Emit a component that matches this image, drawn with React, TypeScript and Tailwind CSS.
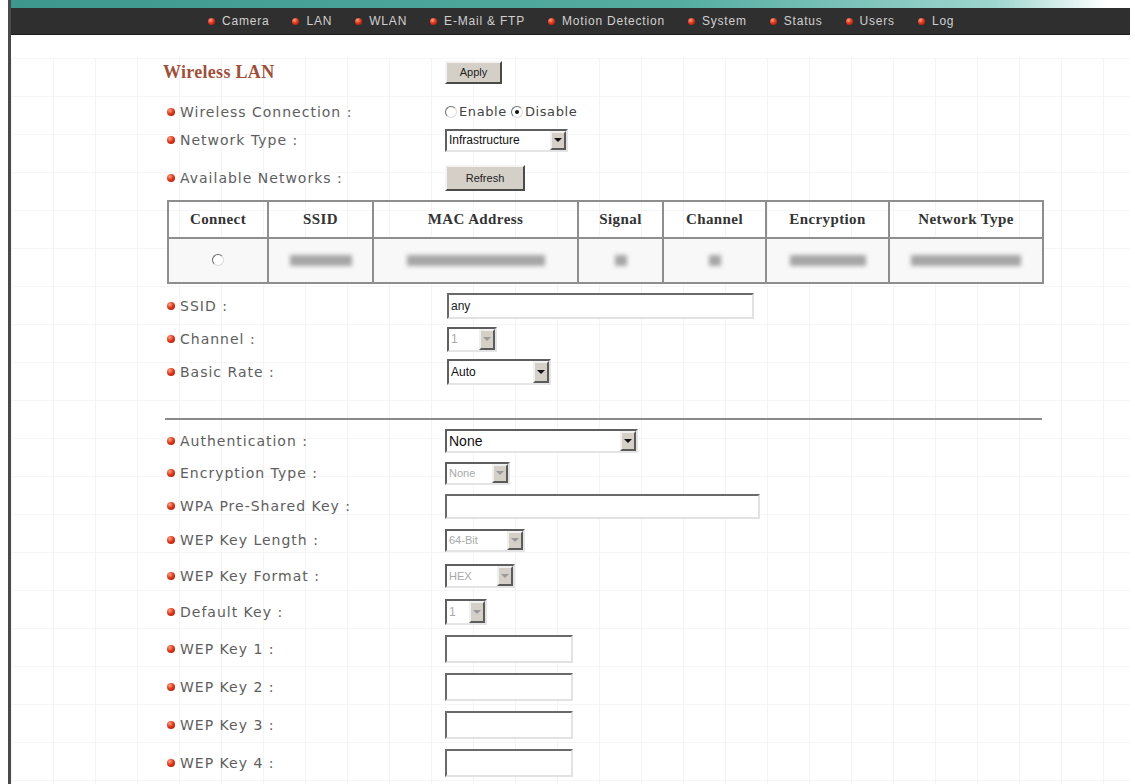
import React from 'react';

const navItems = ['Camera', 'LAN', 'WLAN', 'E-Mail & FTP', 'Motion Detection', 'System', 'Status', 'Users', 'Log'];

const Bullet = ({ small = false }: { small?: boolean }) => (
  <span
    className={`inline-block shrink-0 rounded-full bg-[radial-gradient(circle_at_35%_30%,#ffa386_0%,#e23a1d_45%,#8c1405_100%)] ${
      small ? 'w-[7px] h-[7px]' : 'w-[8px] h-[8px]'
    }`}
  />
);

const WinButton = ({ label, size }: { label: string; size: string }) => (
  <div
    className={`flex items-center justify-center bg-[#d4d0c8] border-2 border-t-[#f4f4f4] border-l-[#f4f4f4] border-b-[#4a4a4a] border-r-[#4a4a4a] text-[11px] text-[#222] font-['Liberation_Sans',sans-serif] ${size}`}
  >
    {label}
  </div>
);

const Arrow = ({ disabled = false }: { disabled?: boolean }) => (
  <span className="w-[16px] h-full flex items-center justify-center bg-[#d4d0c8] border-2 border-t-[#f0f0f0] border-l-[#f0f0f0] border-b-[#5a5a5a] border-r-[#5a5a5a]">
    <span
      className={`w-0 h-0 border-l-[4px] border-r-[4px] border-t-[4px] border-l-transparent border-r-transparent ${
        disabled ? 'border-t-[#9a9a9a]' : 'border-t-[#111]'
      }`}
    />
  </span>
);

const WinSelect = ({ value, size, disabled = false, text = 'text-[12px]' }: { value: string; size: string; disabled?: boolean; text?: string }) => (
  <div className={`flex border-2 border-t-[#5e5e5e] border-l-[#5e5e5e] border-b-[#e4e4e4] border-r-[#e4e4e4] bg-white ${size}`}>
    <span
      className={`flex-1 self-center pl-[2px] leading-none font-['Liberation_Sans',sans-serif] ${text} ${
        disabled ? 'text-[#a8a8a8]' : 'text-[#111]'
      }`}
    >
      {value}
    </span>
    <Arrow disabled={disabled} />
  </div>
);

const WinInput = ({ value = '', size }: { value?: string; size: string }) => (
  <div
    className={`flex items-center border-2 border-t-[#6a6a6a] border-l-[#6a6a6a] border-b-[#e2e2e2] border-r-[#e2e2e2] bg-white pl-[2px] text-[12px] text-[#222] font-['Liberation_Sans',sans-serif] ${size}`}
  >
    {value}
  </div>
);

const Radio = ({ checked = false }: { checked?: boolean }) => (
  <span className="inline-flex items-center justify-center w-[12px] h-[12px] rounded-full border border-t-[#6a6a6a] border-l-[#6a6a6a] border-b-[#dcdcdc] border-r-[#dcdcdc] bg-white">
    {checked && <span className="w-[4px] h-[4px] rounded-full bg-[#111]" />}
  </span>
);

const Row = ({ label, cls, children }: { label: string; cls: string; children: React.ReactNode }) => (
  <div className={`flex items-center ${cls}`}>
    <div className="w-[282px] flex items-center pl-[4px]">
      <Bullet />
      <span className="ml-[5px] text-[14px] tracking-[1px] text-[#5e5e5e] font-['DejaVu_Sans',sans-serif]">{label}</span>
    </div>
    <div className="flex items-center">{children}</div>
  </div>
);

// blurred placeholder for a scanned network value
const Smudge = ({ w }: { w: string }) => <span className={`inline-block h-[11px] bg-[#a6a6a6] blur-[2px] ${w}`} />;

const cols = [
  { title: 'Connect', w: 'w-[100px]' },
  { title: 'SSID', w: 'w-[105px]' },
  { title: 'MAC Address', w: 'w-[205px]' },
  { title: 'Signal', w: 'w-[85px]' },
  { title: 'Channel', w: 'w-[103px]' },
  { title: 'Encryption', w: 'w-[123px]' },
  { title: 'Network Type', w: 'w-[154px]' },
];

const NetworkTable = () => (
  <table className="ml-[4px] mt-[8px] border-collapse border-2 border-[#8e8e8e] font-['Liberation_Serif',serif]">
    <thead>
      <tr className="h-[37px]">
        {cols.map((c) => (
          <th key={c.title} className={`${c.w} border-2 border-[#8e8e8e] text-[15px] tracking-[0.4px] font-bold text-[#333] text-center`}>
            {c.title}
          </th>
        ))}
      </tr>
    </thead>
    <tbody>
      <tr className="h-[45px] bg-[#f8f8f8]">
        <td className="border-2 border-[#8e8e8e] text-center">
          <span className="inline-flex"><Radio /></span>
        </td>
        <td className="border-2 border-[#8e8e8e] text-center"><Smudge w="w-[62px]" /></td>
        <td className="border-2 border-[#8e8e8e] text-center"><Smudge w="w-[138px]" /></td>
        <td className="border-2 border-[#8e8e8e] text-center"><Smudge w="w-[12px]" /></td>
        <td className="border-2 border-[#8e8e8e] text-center"><Smudge w="w-[12px]" /></td>
        <td className="border-2 border-[#8e8e8e] text-center"><Smudge w="w-[76px]" /></td>
        <td className="border-2 border-[#8e8e8e] text-center"><Smudge w="w-[110px]" /></td>
      </tr>
    </tbody>
  </table>
);

export default function App() {
  return (
    <div className="w-[1135px] h-[784px] overflow-hidden bg-white">
      <div className="ml-[8px] mr-[5px] h-full border-l-[3px] border-[#4a4a4a]">
        <div className="h-[8px] bg-[linear-gradient(to_right,#3d978c,#55ada2_60%,#9ed6cf_88%,#ffffff_98%)]" />
        <nav className="h-[27px] bg-[#2f2f2f] flex items-center pl-[197px] gap-[23px] border-b border-[#1c1c1c]">
          {navItems.map((item) => (
            <span key={item} className="flex items-center gap-[7px]">
              <Bullet small />
              <span className="text-[12px] tracking-[0.8px] text-[#d0d0d0] font-['Liberation_Sans',sans-serif]">{item}</span>
            </span>
          ))}
        </nav>

        <main className="pl-[152px] h-full bg-[linear-gradient(to_right,#f4f4f4_1px,transparent_1px),linear-gradient(to_bottom,#f6f6f6_1px,transparent_1px)] bg-[size:42px_38px]">
          <div className="flex items-center mt-[23px] h-[28px]">
            <h1 className="w-[282px] text-[18px] tracking-[0.3px] font-bold text-[#a0503a] font-['Liberation_Serif',serif]">Wireless LAN</h1>
            <WinButton label="Apply" size="w-[57px] h-[23px]" />
          </div>

          <Row label="Wireless Connection :" cls="mt-[12px] h-[28px]">
            <span className="flex items-center gap-[2px] text-[13px] tracking-[0.6px] text-[#444] font-['DejaVu_Sans',sans-serif]">
              <Radio />
              <span className="mr-[2px]">Enable</span>
              <Radio checked />
              <span>Disable</span>
            </span>
          </Row>
          <Row label="Network Type :" cls="h-[28px]">
            <WinSelect value="Infrastructure" size="w-[123px] h-[23px]" />
          </Row>
          <Row label="Available Networks :" cls="mt-[10px] h-[28px]">
            <WinButton label="Refresh" size="w-[80px] h-[26px]" />
          </Row>

          <NetworkTable />

          <Row label="SSID :" cls="mt-[7px] h-[30px]">
            <div className="ml-[2px]">
              <WinInput value="any" size="w-[307px] h-[26px]" />
            </div>
          </Row>
          <Row label="Channel :" cls="mt-[4px] h-[28px]">
            <div className="ml-[2px]">
              <WinSelect value="1" disabled size="w-[50px] h-[25px]" />
            </div>
          </Row>
          <Row label="Basic Rate :" cls="mt-[5px] h-[28px]">
            <div className="ml-[2px]">
              <WinSelect value="Auto" size="w-[104px] h-[26px]" />
            </div>
          </Row>

          <div className="pt-[32px] pb-[9px]">
            <div className="ml-[2px] w-[877px] h-[2px] bg-[#8a8a8a]" />
          </div>

          <Row label="Authentication :" cls="h-[24px]">
            <WinSelect value="None" size="w-[193px] h-[24px]" text="text-[14px]" />
          </Row>
          <Row label="Encryption Type :" cls="mt-[8px] h-[24px]">
            <WinSelect value="None" disabled size="w-[65px] h-[23px]" text="text-[11px]" />
          </Row>
          <Row label="WPA Pre-Shared Key :" cls="mt-[9px] h-[24px]">
            <WinInput size="w-[315px] h-[25px]" />
          </Row>
          <Row label="WEP Key Length :" cls="mt-[10px] h-[24px]">
            <WinSelect value="64-Bit" disabled size="w-[80px] h-[23px]" text="text-[11px]" />
          </Row>
          <Row label="WEP Key Format :" cls="mt-[12px] h-[24px]">
            <WinSelect value="HEX" disabled size="w-[70px] h-[24px]" text="text-[11px]" />
          </Row>
          <Row label="Default Key :" cls="mt-[11px] h-[26px]">
            <WinSelect value="1" disabled size="w-[42px] h-[26px]" />
          </Row>
          <Row label="WEP Key 1 :" cls="mt-[9px] h-[30px]">
            <WinInput size="w-[128px] h-[28px]" />
          </Row>
          <Row label="WEP Key 2 :" cls="mt-[8px] h-[30px]">
            <WinInput size="w-[128px] h-[28px]" />
          </Row>
          <Row label="WEP Key 3 :" cls="mt-[8px] h-[30px]">
            <WinInput size="w-[128px] h-[28px]" />
          </Row>
          <Row label="WEP Key 4 :" cls="mt-[8px] h-[30px]">
            <WinInput size="w-[128px] h-[28px]" />
          </Row>
        </main>
      </div>
    </div>
  );
}
